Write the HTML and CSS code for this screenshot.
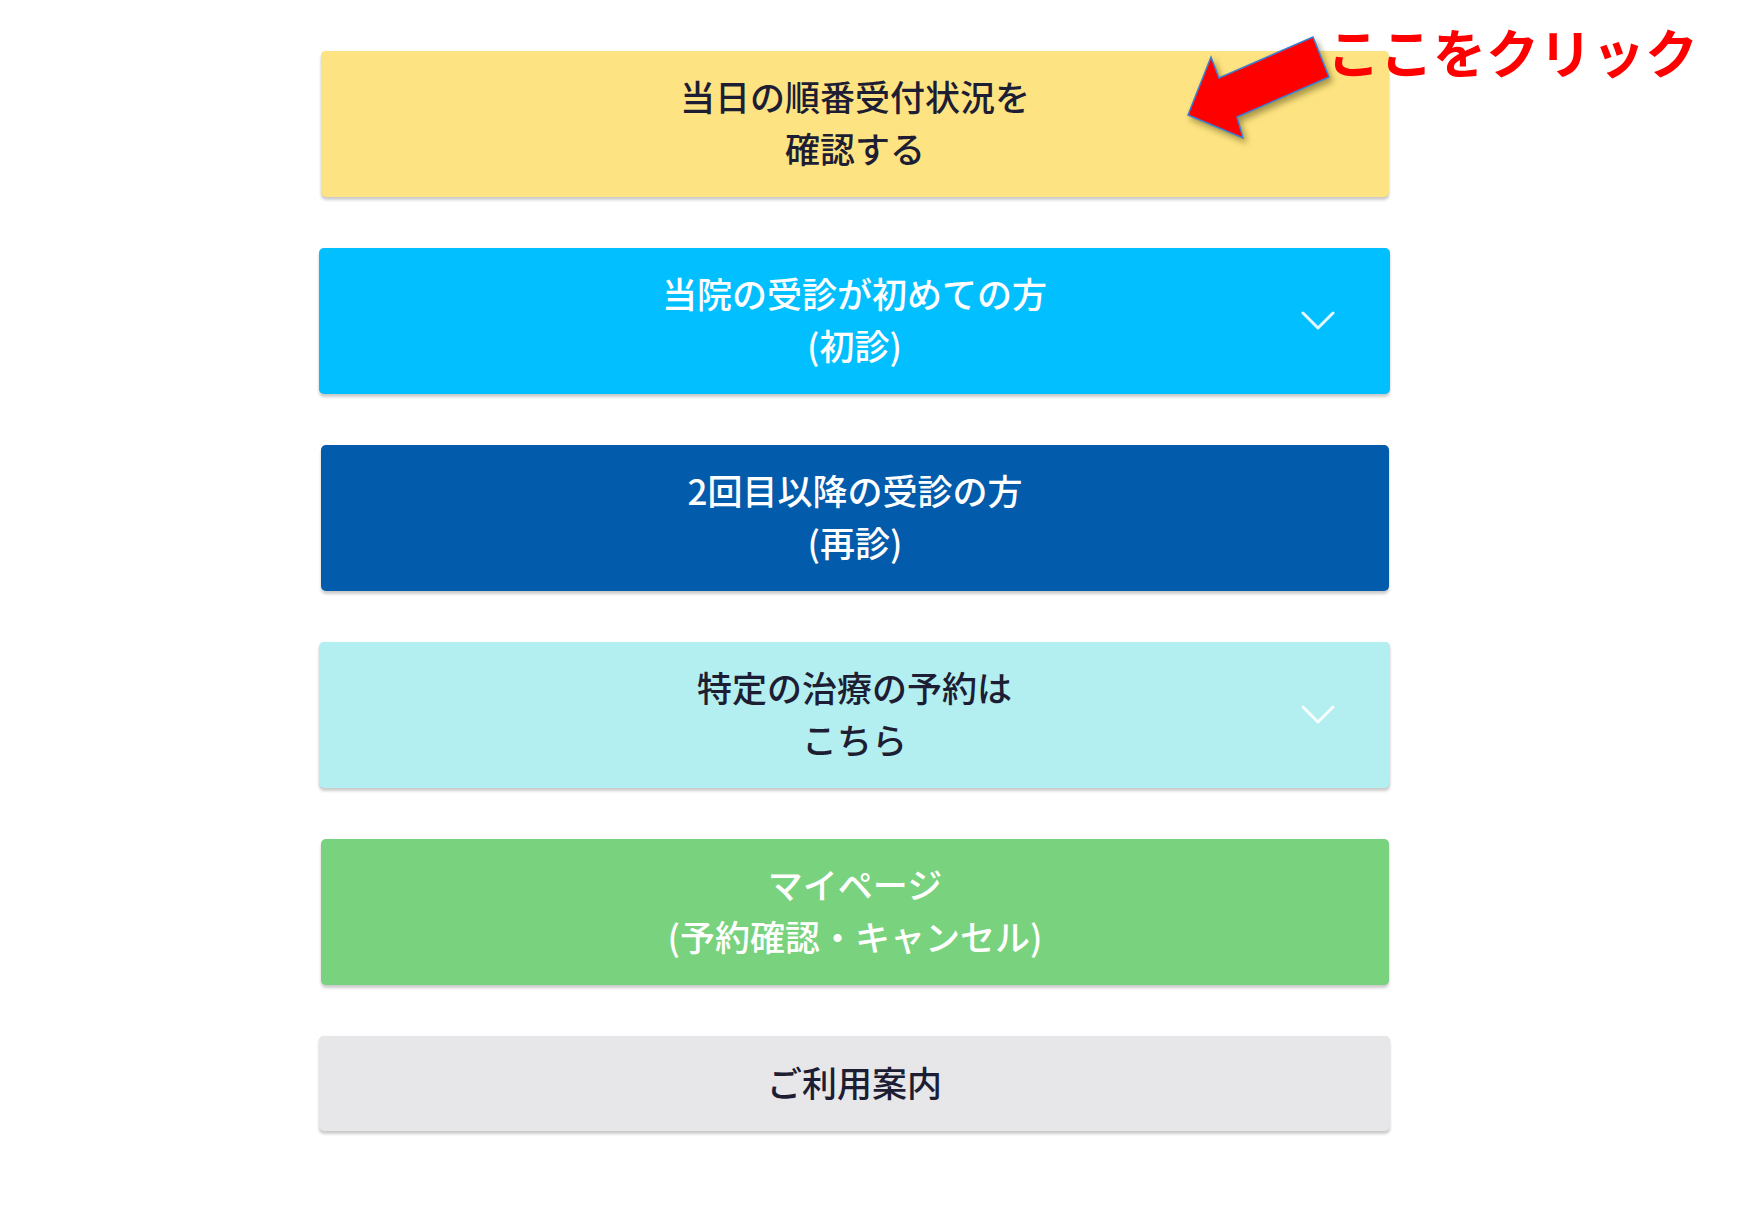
FILE: index.html
```html
<!DOCTYPE html>
<html lang="ja">
<head>
<meta charset="utf-8">
<title>メニュー</title>
<link rel="stylesheet" href="styles.css">
</head>
<body>
<main class="menu">
  <a class="btn btn-yellow" href="#"><span class="label">当日の順番受付状況を<br>確認する</span></a>
  <div class="btn btn-sky accordion"><span class="label">当院の受診が初めての方<br>(初診)</span><span class="chev"><svg viewBox="0 0 34 20" width="34" height="20"><polyline points="2,2 17,17 32,2"/></svg></span></div>
  <a class="btn btn-navy" href="#"><span class="label">2回目以降の受診の方<br>(再診)</span></a>
  <div class="btn btn-aqua accordion"><span class="label">特定の治療の予約は<br>こちら</span><span class="chev"><svg viewBox="0 0 34 20" width="34" height="20"><polyline points="2,2 17,17 32,2"/></svg></span></div>
  <a class="btn btn-green" href="#"><span class="label">マイページ<br>(予約確認・キャンセル)</span></a>
  <a class="btn btn-gray wide" href="#"><span class="label">ご利用案内</span></a>
</main>
<div class="callout">
  <svg class="arrow" viewBox="0 0 160 120" width="160" height="120"><polygon points="8,85 31,27 39,48 133,7 149,47 57,87 63,108"/></svg>
  <span class="callout-text">ここをクリック</span>
</div>
</body>
</html>
```
FILE: styles.css
```css
html, body {
  margin: 0;
  padding: 0;
  background: #ffffff;
}
body {
  font-family: "Noto Sans CJK JP", "Noto Sans", sans-serif;
  position: relative;
  min-height: 1211px;
}
.menu {
  display: flex;
  flex-direction: column;
  gap: 51px;
  padding: 51px 0 0 321px;
  width: 1068px;
}
.btn {
  display: grid;
  grid-template-columns: 1fr auto 1fr;
  align-items: center;
  height: 146px;
  box-sizing: border-box;
  padding: 0 0 4px;
  border-radius: 5px;
  text-decoration: none;
  font-size: 35px;
  font-weight: 500;
  line-height: 52px;
  text-align: center;
  box-shadow: 0 0 1px rgba(0,0,0,0.12), 0 3px 3px rgba(0,0,0,0.2);
}
.btn .label {
  grid-column: 2;
  white-space: nowrap;
}
.btn-gray {
  height: 95px;
}
.accordion, .wide {
  margin: 0 -1px 0 -2px;
}
.chev {
  grid-column: 3;
  justify-self: end;
  margin-right: 55px;
  display: flex;
  padding-top: 4px;
}
.chev svg polyline {
  fill: none;
  stroke: rgba(255,255,255,0.9);
  stroke-width: 3;
  stroke-linecap: round;
  stroke-linejoin: round;
}
.btn-yellow { background: #fde381; color: #1d1d33; }
.btn-sky { background: #02bfff; color: #ffffff; }
.btn-navy { background: #035bac; color: #ffffff; }
.btn-aqua { background: #b3eff0; color: #1d1d33; }
.btn-green { background: #79d27e; color: #ffffff; }
.btn-gray { background: #e7e7e9; color: #1d1d33; }

.callout .arrow {
  position: absolute;
  left: 1180px;
  top: 30px;
  overflow: visible;
  filter: drop-shadow(3px 4px 3px rgba(60,50,0,0.45));
}
.callout .arrow polygon {
  fill: #ff0000;
  stroke: #3a7fd6;
  stroke-width: 1.5;
  stroke-linejoin: miter;
}
.callout-text {
  position: absolute;
  left: 1327px;
  top: 25px;
  font-size: 53px;
  line-height: 53px;
  font-weight: 700;
  color: #ff0000;
  white-space: nowrap;
}
```
